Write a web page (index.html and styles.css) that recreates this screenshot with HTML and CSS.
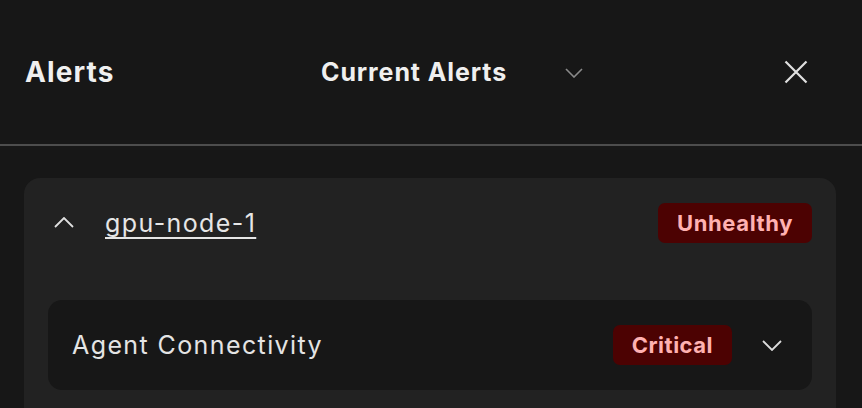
FILE: index.html
```html
<!DOCTYPE html>
<html lang="en">
<head>
<meta charset="utf-8">
<title>Alerts</title>
<link rel="stylesheet" href="styles.css">
</head>
<body>
<div class="panel">
  <header class="header">
    <h1 class="title">Alerts</h1>
    <div class="select">
      <span class="select-label">Current Alerts</span>
      <svg class="select-chev" width="18" height="10" viewBox="0 0 18 10"><path d="M1 1 L9 9 L17 1" fill="none" stroke="#8a8a8a" stroke-width="1.6"/></svg>
    </div>
    <div class="spacer"></div>
    <button class="close" aria-label="Close">
      <svg width="24" height="24" viewBox="0 0 24 24"><path d="M1.5 1.5 L22.5 22.5 M22.5 1.5 L1.5 22.5" fill="none" stroke="#e0e0e0" stroke-width="2.2"/></svg>
    </button>
  </header>
  <main class="body">
    <section class="card">
      <div class="card-head">
        <span class="caret">
          <svg width="20" height="11" viewBox="0 0 20 11"><path d="M1 10 L10 1 L19 10" fill="none" stroke="#e0e0e0" stroke-width="1.8"/></svg>
        </span>
        <a class="node" href="#">gpu-node-1</a>
        <span class="badge">Unhealthy</span>
      </div>
      <div class="alert-row">
        <span class="alert-name">Agent Connectivity</span>
        <span class="badge badge-sm">Critical</span>
        <span class="row-chev">
          <svg width="20" height="11" viewBox="0 0 20 11"><path d="M1 1 L10 10 L19 1" fill="none" stroke="#dcdcdc" stroke-width="1.8"/></svg>
        </span>
      </div>
    </section>
  </main>
</div>
</body>
</html>
```

FILE: styles.css
```css
* { box-sizing: border-box; }
html, body {
  margin: 0;
  padding: 0;
  background: #171717;
  height: 100%;
  overflow: hidden;
}
body {
  font-family: Inter, "Noto Sans", sans-serif;
  color: #eeeeee;
}
.panel {
  width: 862px;
  height: 408px;
  overflow: hidden;
}
.header {
  height: 144px;
  display: flex;
  align-items: center;
  padding: 0 54px 0 25px;
  border-bottom: 2px solid #4d4d4d;
  box-sizing: content-box;
}
.title {
  margin: 0;
  width: 296px;
  font-size: 28px;
  font-weight: 700;
  color: #f0f0f0;
  letter-spacing: 1.1px;
}
.select {
  width: 262px;
  display: flex;
  align-items: center;
  justify-content: space-between;
}
.select-label {
  font-size: 25px;
  font-weight: 700;
  color: #efefef;
  letter-spacing: 0.9px;
}
.select-chev { display: block; margin-top: 1px; }
.spacer { flex: 1; }
.close {
  background: none;
  border: 0;
  padding: 0;
  width: 24px;
  height: 24px;
  display: flex;
}
.body {
  padding: 32px 26px 0 24px;
}
.card {
  background: #222222;
  border-radius: 16px;
  padding: 25px 24px 24px 24px;
  height: 260px;
}
.card-head {
  display: flex;
  align-items: center;
  height: 40px;
}
.caret {
  width: 32px;
  display: flex;
  justify-content: center;
  margin-right: 25px;
  margin-top: -2px;
}
.caret svg, .row-chev svg { display: block; }
.node {
  flex: 1;
  font-size: 25px;
  color: #e6e6e6;
  text-decoration: underline;
  text-decoration-thickness: 2px;
  text-underline-offset: 5px;
  letter-spacing: 1.4px;
}
.badge {
  background: #4c0202;
  color: #ffb1b1;
  font-weight: 700;
  font-size: 22px;
  height: 40px;
  padding: 0 19px;
  border-radius: 7px;
  display: inline-flex;
  align-items: center;
  letter-spacing: 0.6px;
}
.badge-sm {
  letter-spacing: 0.5px;
}
.alert-row {
  margin-top: 57px;
  background: #171717;
  border-radius: 14px;
  height: 90px;
  display: flex;
  align-items: center;
  padding: 0 30px 0 24px;
}
.alert-name {
  flex: 1;
  font-size: 25px;
  color: #e4e4e4;
  letter-spacing: 1.4px;
}
.row-chev {
  margin-left: 30px;
  display: flex;
}
```
